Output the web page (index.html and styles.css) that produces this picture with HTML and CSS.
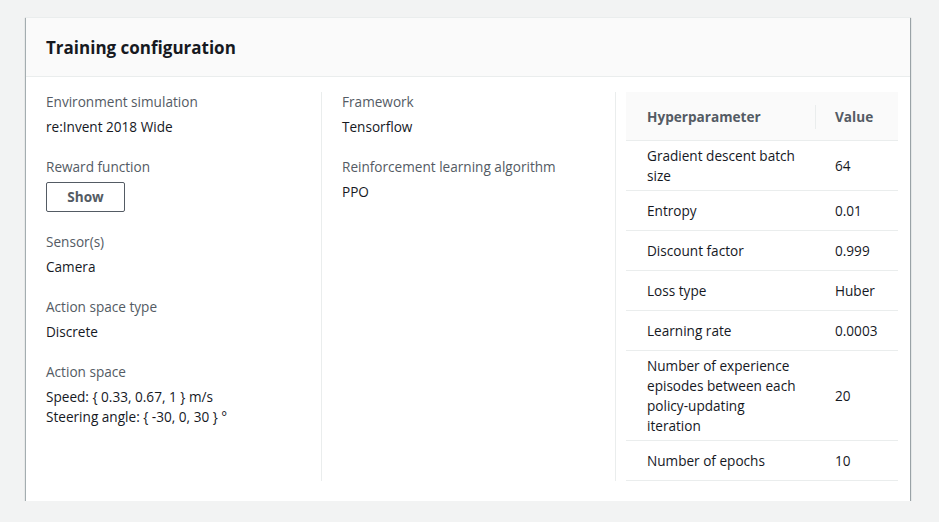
FILE: index.html
```html
<!DOCTYPE html>
<html lang="en">
<head>
<meta charset="utf-8">
<title>Training configuration</title>
<link rel="stylesheet" href="styles.css">
</head>
<body>
<section class="card">
  <header class="card-header">
    <h2 class="card-title">Training configuration</h2>
  </header>
  <div class="card-body">
    <div class="col col-first">
      <div class="field">
        <div class="label">Environment simulation</div>
        <div class="value">re:Invent 2018 Wide</div>
      </div>
      <div class="field">
        <div class="label">Reward function</div>
        <button class="btn" type="button">Show</button>
      </div>
      <div class="field">
        <div class="label">Sensor(s)</div>
        <div class="value">Camera</div>
      </div>
      <div class="field">
        <div class="label">Action space type</div>
        <div class="value">Discrete</div>
      </div>
      <div class="field">
        <div class="label">Action space</div>
        <div class="value">Speed: { 0.33, 0.67, 1 } m/s<br>Steering angle: { -30, 0, 30 } °</div>
      </div>
    </div>
    <div class="col col-mid">
      <div class="field">
        <div class="label">Framework</div>
        <div class="value">Tensorflow</div>
      </div>
      <div class="field">
        <div class="label">Reinforcement learning algorithm</div>
        <div class="value">PPO</div>
      </div>
    </div>
    <div class="col col-table">
      <div class="hp-table">
        <div class="hp-row hp-head">
          <div class="hp-cell hp-name">Hyperparameter</div>
          <div class="hp-cell hp-val"><span class="head-sep"></span>Value</div>
        </div>
        <div class="hp-row">
          <div class="hp-cell hp-name">Gradient descent batch size</div>
          <div class="hp-cell hp-val">64</div>
        </div>
        <div class="hp-row">
          <div class="hp-cell hp-name">Entropy</div>
          <div class="hp-cell hp-val">0.01</div>
        </div>
        <div class="hp-row">
          <div class="hp-cell hp-name">Discount factor</div>
          <div class="hp-cell hp-val">0.999</div>
        </div>
        <div class="hp-row">
          <div class="hp-cell hp-name">Loss type</div>
          <div class="hp-cell hp-val">Huber</div>
        </div>
        <div class="hp-row">
          <div class="hp-cell hp-name">Learning rate</div>
          <div class="hp-cell hp-val">0.0003</div>
        </div>
        <div class="hp-row">
          <div class="hp-cell hp-name">Number of experience episodes between each policy-updating iteration</div>
          <div class="hp-cell hp-val">20</div>
        </div>
        <div class="hp-row">
          <div class="hp-cell hp-name">Number of epochs</div>
          <div class="hp-cell hp-val">10</div>
        </div>
      </div>
    </div>
  </div>
</section>
</body>
</html>
```
FILE: styles.css
```css
* { box-sizing: border-box; }

html, body {
  margin: 0;
  background: #f2f3f3;
}

body {
  padding: 17px 29px 0 26px;
  font-family: "Open Sans", "Noto Sans", sans-serif;
  font-size: 13.6px;
  line-height: 20px;
  color: #16191f;
}

.card {
  width: 884px;
  background: #ffffff;
  border-top: 1px solid #eaeded;
  box-shadow: 0 1px 1px 0 rgba(0, 28, 36, 0.55), 1px 1px 1px 0 rgba(0, 28, 36, 0.3), -1px 1px 1px 0 rgba(0, 28, 36, 0.25);
}

.card-header {
  background: #fafafa;
  border-bottom: 1px solid #eaeded;
  padding: 19px 20px 17px 20px;
}

.card-title {
  margin: 0;
  font-size: 17px;
  line-height: 22px;
  font-weight: 700;
  color: #16191f;
}

.card-body {
  display: grid;
  grid-template-columns: 295px 294px 295px;
  padding: 15px 0 20px 0;
}

.col {
  min-height: 388px;
}

.col-first {
  padding: 0 20px;
}

.col-mid {
  border-left: 1px solid #eaeded;
  padding: 0 20px;
}

.col-table {
  border-left: 1px solid #eaeded;
  padding: 0 12px 0 10px;
}

.field {
  margin-bottom: 20px;
}

.label {
  color: #545b64;
  margin-bottom: 5px;
}

.value {
  color: #16191f;
}

.btn {
  display: block;
  font-family: inherit;
  font-size: 13.6px;
  line-height: 20px;
  font-weight: 700;
  color: #545b64;
  background: #ffffff;
  border: 1px solid #545b64;
  border-radius: 2px;
  padding: 4px 19px;
  width: 79px;
  height: 30px;
  cursor: pointer;
}

.hp-table {
  width: 272px;
}

.hp-row {
  display: grid;
  grid-template-columns: 189px 83px;
  align-items: center;
  min-height: 40px;
  padding: 5px 0 4px 0;
  border-bottom: 1px solid #eaeded;
}

.hp-head {
  background: #fafafa;
  min-height: 49px;
  font-weight: 700;
  color: #545b64;
}

.hp-name {
  padding-left: 21px;
  padding-right: 16px;
}

.hp-val {
  padding-left: 20px;
  position: relative;
}

.head-sep {
  position: absolute;
  left: 0;
  top: -2px;
  width: 1px;
  height: 24px;
  background: #eaeded;
}
```
